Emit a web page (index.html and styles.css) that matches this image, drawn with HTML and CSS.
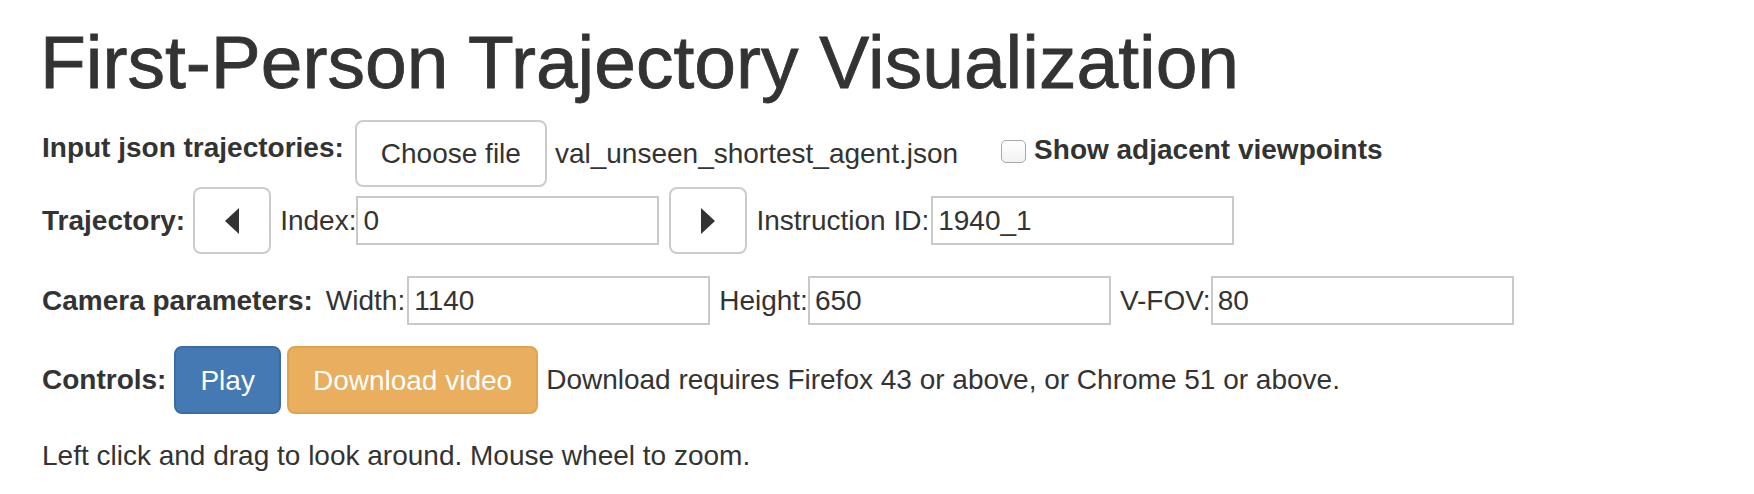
FILE: index.html
```html
<!DOCTYPE html>
<html lang="en">
<head>
<meta charset="utf-8">
<title>First-Person Trajectory Visualization</title>
<link rel="stylesheet" href="styles.css">
</head>
<body>
<div class="page">
  <h1 class="title">First-Person Trajectory Visualization</h1>

  <div class="row row-file">
    <span class="lbl lbl-up gap-11">Input json trajectories:</span>
    <button class="btn btn-default gap-8" type="button">Choose file</button>
    <span class="filename gap-43">val_unseen_shortest_agent.json</span>
    <label class="check">
      <span class="box"></span>
      <span class="check-text">Show adjacent viewpoints</span>
    </label>
  </div>

  <div class="row row-traj">
    <span class="lbl gap-8">Trajectory:</span>
    <button class="btn btn-default btn-icon gap-9" type="button" aria-label="Previous">
      <svg width="14" height="26" viewBox="0 0 14 26"><polygon points="14,0 14,26 0,13" fill="#333"/></svg>
    </button>
    <span class="txt">Index:</span>
    <input class="field gap-10" type="text" value="0">
    <button class="btn btn-default btn-icon gap-9" type="button" aria-label="Next">
      <svg width="14" height="26" viewBox="0 0 14 26"><polygon points="0,0 0,26 14,13" fill="#333"/></svg>
    </button>
    <span class="txt gap-2">Instruction ID:</span>
    <input class="field" type="text" value="1940_1">
  </div>

  <div class="row row-cam">
    <span class="lbl gap-13">Camera parameters:</span>
    <span class="txt gap-2">Width:</span>
    <input class="field gap-9" type="text" value="1140">
    <span class="txt">Height:</span>
    <input class="field gap-9" type="text" value="650">
    <span class="txt">V-FOV:</span>
    <input class="field" type="text" value="80">
  </div>

  <div class="row row-ctl">
    <span class="lbl gap-8">Controls:</span>
    <button class="btn btn-primary gap-6" type="button">Play</button>
    <button class="btn btn-warning gap-8" type="button">Download video</button>
    <span class="txt">Download requires Firefox 43 or above, or Chrome 51 or above.</span>
  </div>

  <p class="help">Left click and drag to look around. Mouse wheel to zoom.</p>
</div>
</body>
</html>
```

FILE: styles.css
```css
html, body {
  margin: 0;
  padding: 0;
  background: #ffffff;
}

body {
  font-family: "Liberation Sans", Arial, Helvetica, sans-serif;
  font-size: 28px;
  line-height: 40px;
  color: #333333;
}

.page {
  padding-left: 42px;
}

.title {
  font-size: 75px;
  line-height: 82px;
  font-weight: 400;
  margin: 21px 0 17px -2px;
  color: #333333;
  -webkit-text-stroke: 0.8px #333333;
}

.row {
  display: flex;
  align-items: center;
  white-space: nowrap;
}

.row-file { height: 67px; }
.row-traj { height: 67px; }
.row-cam { height: 49px; margin-top: 22px; }
.row-ctl { height: 68px; margin-top: 21px; }

.lbl {
  font-weight: 700;
}

.lbl-up {
  padding-bottom: 12px;
}

.gap-2 { margin-right: 2px; }
.gap-6 { margin-right: 6px; }
.gap-8 { margin-right: 8px; }
.gap-9 { margin-right: 9px; }
.gap-10 { margin-right: 10px; }
.gap-11 { margin-right: 11px; }
.gap-13 { margin-right: 13px; }
.gap-43 { margin-right: 43px; }

.btn {
  box-sizing: border-box;
  height: 67px;
  margin-top: 0;
  margin-bottom: 0;
  margin-left: 0;
  padding: 12px 24px;
  border: 2px solid #cccccc;
  border-radius: 8px;
  background: #ffffff;
  font-family: inherit;
  font-size: 28px;
  line-height: 39px;
  color: #333333;
  cursor: pointer;
}

.btn-icon {
  width: 78px;
  padding: 0;
  display: flex;
  align-items: center;
  justify-content: center;
}

.btn-primary {
  height: 68px;
  background: #4479b3;
  border-color: #3a6ca5;
  color: #ffffff;
}

.btn-warning {
  height: 68px;
  background: #e9ae5e;
  border-color: #e0a352;
  color: #ffffff;
}

.field {
  box-sizing: border-box;
  width: 303px;
  height: 49px;
  margin-top: 0;
  margin-bottom: 0;
  margin-left: 0;
  padding: 0 5px;
  border: 2px solid #c9c9c9;
  border-radius: 0;
  background: #ffffff;
  font-family: inherit;
  font-size: 28px;
  color: #333333;
  outline: none;
}

.check {
  display: flex;
  align-items: center;
  font-weight: 700;
}

.box {
  box-sizing: border-box;
  width: 25px;
  height: 23px;
  margin-right: 8px;
  margin-bottom: 4px;
  border: 1.5px solid #a8a8a8;
  border-radius: 5px;
  background: linear-gradient(#ffffff, #f2f2f2);
}

.check-text {
  padding-bottom: 8px;
}

.help {
  margin: 22px 0 0;
}
```
